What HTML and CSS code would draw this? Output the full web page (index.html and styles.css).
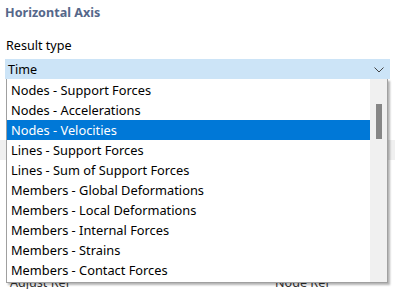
FILE: index.html
```html
<!DOCTYPE html>
<html lang="en">
<head>
  <meta charset="UTF-8">
  <title>Horizontal Axis</title>
  <link rel="stylesheet" href="styles.css">
</head>
<body>
  <div class="panel">
    <h2 class="section-title">Horizontal Axis</h2>
    <div class="field">
      <label class="field-label">Result type</label>
      <div class="combo">
        <span class="combo-value">Time</span>
        <svg class="combo-arrow" width="10" height="6" viewBox="0 0 10 6">
          <path d="M0.5 0.5 L5 5 L9.5 0.5" fill="none" stroke="#444" stroke-width="1"/>
        </svg>
        <div class="dropdown">
          <ul class="options">
            <li>Nodes - Support Forces</li>
            <li>Nodes - Accelerations</li>
            <li class="selected">Nodes - Velocities</li>
            <li>Lines - Support Forces</li>
            <li>Lines - Sum of Support Forces</li>
            <li>Members - Global Deformations</li>
            <li>Members - Local Deformations</li>
            <li>Members - Internal Forces</li>
            <li>Members - Strains</li>
            <li>Members - Contact Forces</li>
          </ul>
          <div class="scrollbar"><div class="thumb"></div></div>
        </div>
      </div>
    </div>
    <!-- content hidden behind the open list -->
    <div class="behind">
      <div class="behind-row"></div>
      <div class="behind-labels">
        <span>Adjust Ref</span>
        <span>Node Ref</span>
      </div>
    </div>
  </div>
</body>
</html>
```

FILE: styles.css
```css
* {
  margin: 0;
  padding: 0;
  box-sizing: border-box;
}
body {
  background: #fff;
  font-family: "Noto Sans", "Open Sans", sans-serif;
  font-size: 12.6px;
  color: #000;
  overflow: hidden;
}
.panel {
  padding: 0 5px;
}
.section-title {
  font-size: 12.6px;
  font-weight: bold;
  color: #55678a;
  height: 27px;
  padding-top: 4px;
}
.field-label {
  display: block;
  height: 32px;
  padding-top: 10px;
  padding-left: 1px;
}
.combo {
  position: relative;
  height: 20px;
  width: 385px;
  background: #cce4f7;
  display: flex;
  align-items: center;
  justify-content: space-between;
  padding: 0 6px 0 3px;
}
.combo-arrow {
  margin-top: 1px;
}
/* open list */
.dropdown {
  position: absolute;
  top: 20px;
  left: 1px;
  width: 382px;
  height: 204px;
  background: #fff;
  border: 1px solid #a0a0a0;
  border-top: none;
  box-shadow: 2px 2px 2px rgba(0, 0, 0, 0.3);
  display: flex;
  z-index: 2;
}
.options {
  list-style: none;
  flex: 1;
  padding-top: 1px;
}
.options li {
  height: 20px;
  line-height: 20px;
  padding-left: 4px;
  white-space: nowrap;
  font-size: 12.8px;
}
.options li.selected {
  background: #0078d7;
  color: #fff;
}
.scrollbar {
  width: 17px;
  background: #f0f0f0;
  padding-top: 25px;
  display: flex;
  justify-content: center;
}
.thumb {
  width: 6px;
  height: 35px;
  background: #868686;
}
.behind {
  margin: 0 -5px;
}
.behind-row {
  margin-top: 61px;
  height: 20px;
  background: #f0f0f0;
}
.behind-labels {
  display: flex;
  padding: 116px 10px 0;
  color: #333;
  line-height: 14px;
}
.behind-labels span:first-child {
  width: 265px;
}
```
